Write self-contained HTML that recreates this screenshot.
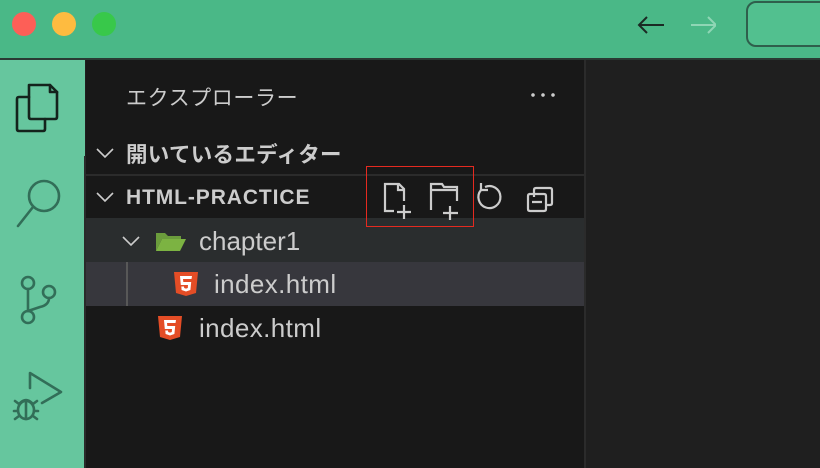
<!DOCTYPE html>
<html><head><meta charset="utf-8"><style>
*{margin:0;padding:0;box-sizing:border-box}
body{width:820px;height:468px;overflow:hidden;background:#1f1f1f;font-family:"Liberation Sans","Noto Sans CJK JP",sans-serif;position:relative}
.abs{position:absolute}
.t{color:#cccccc;white-space:nowrap}
</style></head><body>
<div class="abs" style="left:0;top:0;width:820px;height:58px;background:#4ab887"></div>
<div class="abs" style="left:0;top:58px;width:820px;height:2px;background:#2a3a33"></div>
<div class="abs" style="left:12px;top:12px;width:24px;height:24px;border-radius:50%;background:#fd5f57"></div>
<div class="abs" style="left:52px;top:12px;width:24px;height:24px;border-radius:50%;background:#febb40"></div>
<div class="abs" style="left:92px;top:12px;width:24px;height:24px;border-radius:50%;background:#38c84a"></div>
<svg class="abs" style="left:636px;top:12px" width="80" height="26" fill="none" stroke-width="2">
<path d="M28 13H3M11 5L3 13L11 21" stroke="#1b2a24"/>
<path d="M55 13H80M72 5L80 13L72 21" stroke="#8fd6b5"/>
</svg>
<div class="abs" style="left:746px;top:1px;width:90px;height:46px;border:2px solid #2f5f4c;border-radius:10px;background:#52c08f"></div>

<div class="abs" style="left:0;top:60px;width:85px;height:408px;background:#66c69e"></div>
<div class="abs" style="left:84px;top:156px;width:2px;height:312px;background:#2a2a2a"></div>
<svg class="abs" style="left:0;top:60px" width="85" height="408" fill="none" stroke-linecap="round" stroke-linejoin="round">
<g stroke="#14231c" stroke-width="2.6">
<path d="M29 25H50L57 32V57Q57 59 55 59H31Q29 59 29 57Z"/>
<path d="M50 25V32H57"/>
<path d="M29 37H19Q17 37 17 39V69Q17 71 19 71H43Q45 71 45 69V59"/>
</g>
<g stroke="#326e58" stroke-width="2.6">
<circle cx="44" cy="136" r="15"/><path d="M33 147L18 166"/>
<circle cx="28" cy="223" r="6"/><circle cx="28" cy="257" r="6"/><circle cx="49" cy="232" r="6"/>
<path d="M28 229V251M49 238Q49 245 40 247L28 251"/>
<path d="M30 328V313L61 332L42 343"/>
<ellipse cx="26" cy="350" rx="8" ry="9"/><path d="M20 343Q26 337 32 343M15 341L19 344M37 341L33 344M14 351H18M34 351H38M15 359L19 356M37 359L33 356M26 343V359"/>
</g>
</svg>

<div class="abs" style="left:86px;top:60px;width:498px;height:408px;background:#181818"></div>
<div class="abs" style="left:584px;top:60px;width:2px;height:408px;background:#2b2b2b"></div>
<div class="abs t" style="left:126px;top:82px;font-size:21px;letter-spacing:0.6px">エクスプローラー</div>
<div class="abs" style="left:528px;top:93px;width:30px;height:4px;background:radial-gradient(circle,#ccc 1.6px,transparent 2px) 0 0/10px 4px"></div>
<svg class="abs" style="left:94px;top:140px" width="24" height="220" fill="none" stroke="#cccccc" stroke-width="1.6">
<path d="M3 9L11 17L19 9"/><path d="M3 53L11 61L19 53"/>
</svg>
<div class="abs t" style="left:126px;top:138px;font-size:21.5px;font-weight:bold;letter-spacing:0.3px">開いているエディター</div>
<div class="abs" style="left:86px;top:174px;width:498px;height:2px;background:#2b2b2b"></div>
<div class="abs t" style="left:126px;top:186px;font-size:21px;font-weight:bold;letter-spacing:0.9px">HTML-PRACTICE</div>
<div class="abs" style="left:86px;top:218px;width:498px;height:44px;background:#2a2d2e"></div>
<div class="abs" style="left:86px;top:262px;width:498px;height:44px;background:#37373d"></div>
<div class="abs" style="left:126px;top:262px;width:2px;height:44px;background:#585858"></div>
<svg class="abs" style="left:120px;top:232px" width="24" height="20" fill="none" stroke="#cccccc" stroke-width="1.6"><path d="M3 5L11 13L19 5"/></svg>
<svg class="abs" style="left:155px;top:230px" width="32" height="22"><path d="M1 3H10L13 6H26V9H7L1 21Z" fill="#6b9c3c"/><path d="M7 9H31L25 21H1Z" fill="#7cb342"/></svg>
<div class="abs t" style="left:199px;top:226px;font-size:26px">chapter1</div>
<svg class="abs" style="left:173px;top:271px" width="26" height="26" viewBox="0 0 26 26"><path d="M1 1H25L23 22L13 25L3 22Z" fill="#e44d26"/><path d="M7 5H19L18.5 8H10L10.3 11H18.2L17.4 19L13 20.5L8.6 19L8.3 15.5H11L11.2 17L13 17.6L14.8 17L15 14H7.8Z" fill="#fff"/></svg>
<div class="abs t" style="left:214px;top:269px;font-size:26px;letter-spacing:0.4px">index.html</div>
<svg class="abs" style="left:157px;top:315px" width="26" height="26" viewBox="0 0 26 26"><path d="M1 1H25L23 22L13 25L3 22Z" fill="#e44d26"/><path d="M7 5H19L18.5 8H10L10.3 11H18.2L17.4 19L13 20.5L8.6 19L8.3 15.5H11L11.2 17L13 17.6L14.8 17L15 14H7.8Z" fill="#fff"/></svg>
<div class="abs t" style="left:199px;top:313px;font-size:26px;letter-spacing:0.4px">index.html</div>

<svg class="abs" style="left:360px;top:170px" width="200" height="60" fill="none" stroke="#cccccc" stroke-width="2.2">
<path d="M34 41H25V14H39L44 19V31M38 14V20H44M37 42H51M44 35V49"/>
<path d="M71 40V14H82L84 17H97V31M71 20H97M83 43H98M90 36V50"/>
<path d="M125 17A11 11 0 1 1 121 20M121 13V20H128"/>
<path d="M174 27V20Q174 18 176 18H190Q192 18 192 20V33Q192 35 190 35H186M169 24H184Q186 24 186 26V39Q186 41 184 41H170Q168 41 168 39V26Q168 24 170 24ZM172 32H182"/>
</svg>
<div class="abs" style="left:366px;top:166px;width:108px;height:61px;border:1px solid #e52a20"></div>
</body></html>
